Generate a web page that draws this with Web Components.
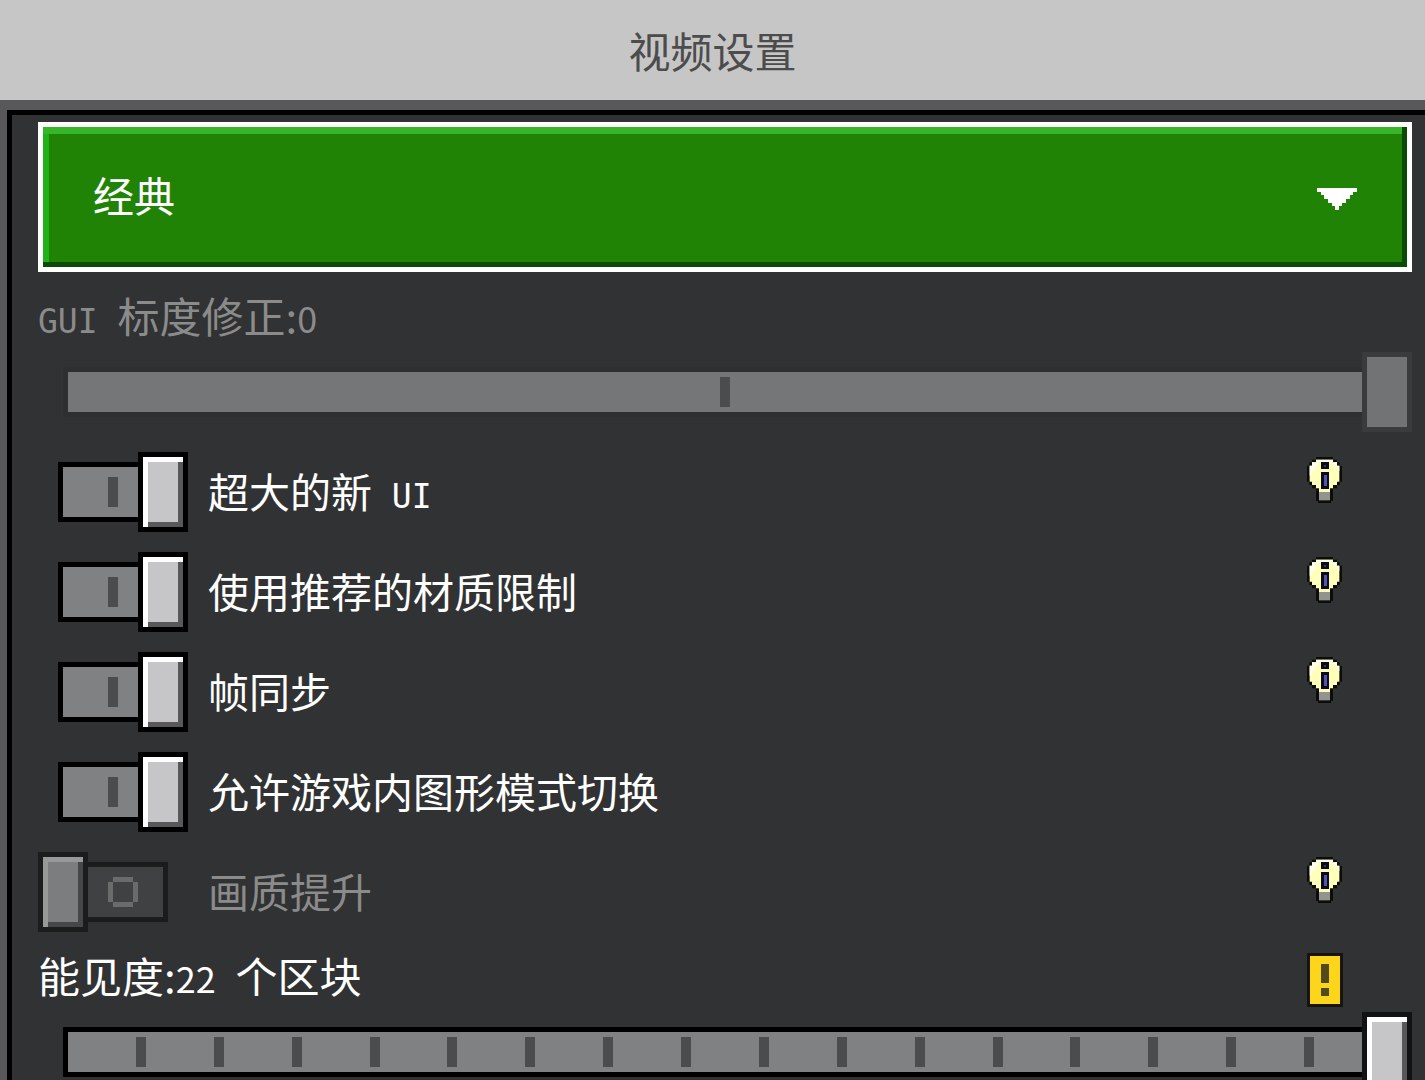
<!DOCTYPE html>
<html lang="zh-CN">
<head>
<meta charset="utf-8">
<meta name="viewport" content="width=device-width, initial-scale=1">
<title>视频设置</title>
<style>
  html, body { height: 100%; }
  body {
    margin: 0;
    background: #313233;
    color: #fff;
    font: 41px/50px "Noto Sans CJK SC", sans-serif;
  }
  .latin { font: 33px/1px "DejaVu Sans Mono", monospace; }
  .num { font-size: 36px; line-height: 1px; }
</style>
</head>
<body>

<settings-screen>
  <span slot="title">视频设置</span>

  <mode-select></mode-select>

  <option-slider steps="2" value="0" disabled><span class="latin">GUI </span>标度修正:<span class="num">0</span></option-slider>

  <option-toggle checked>超大的新<span class="latin"> UI</span><hint-icon slot="hint"></hint-icon></option-toggle>
  <option-toggle checked>使用推荐的材质限制<hint-icon slot="hint"></hint-icon></option-toggle>
  <option-toggle checked>帧同步<hint-icon slot="hint"></hint-icon></option-toggle>
  <option-toggle checked>允许游戏内图形模式切换</option-toggle>
  <option-toggle disabled>画质提升<hint-icon slot="hint"></hint-icon></option-toggle>

  <option-slider steps="17">能见度:<span class="num">22</span><span class="latin"> </span>个区块<hint-icon slot="hint" type="warning"></hint-icon></option-slider>
</settings-screen>

<script>
'use strict'

// page frame: title bar and the scrolling panel
class SettingsScreen extends HTMLElement {
  constructor() {
    super();
    this.attachShadow({mode: 'open'}).innerHTML = `
      <style>
        :host { display: flex; flex-direction: column; height: 100%; }
        header {
          flex: none;
          padding: 25px 0;
          background: #c6c6c6;
          text-align: center;
        }
        h1 { margin: 0; font-size: 42px; font-weight: 400; line-height: 50px; color: #4c4c4c; }
        .frame {
          flex: 1;
          min-height: 0;
          display: flex;
          border: solid #58585a;
          border-width: 10px 0 0 7px;
        }
        main {
          flex: 1;
          min-width: 0;
          overflow: hidden auto;
          scrollbar-width: none;
          padding: 7px 13px 0 26px;
          border: solid #000;
          border-width: 5px 0 0 5px;
        }
      </style>
      <header><h1><slot name="title"></slot></h1></header>
      <div class="frame"><main><slot></slot></main></div>
    `;
  }
}

// green drop-down
class ModeSelect extends HTMLElement {
  constructor() {
    super();
    this.attachShadow({mode: 'open'}).innerHTML = `
      <style>
        :host { display: grid; align-items: center; margin-bottom: 10px; }
        select, svg { grid-area: 1 / 1; }
        select {
          appearance: none;
          box-sizing: border-box;
          width: 100%;
          height: 150px;
          margin: 0;
          padding: 0 100px 6px 50px;
          border: 5px solid #fff;
          border-radius: 0;
          outline: none;
          background: #218306;
          box-shadow: inset -5px -5px #0b4b06, inset 0 7px #37b629, inset 6px 0 #20b317;
          color: #fff;
          font: inherit;
        }
        svg {
          justify-self: end;
          width: 40px;
          height: 22px;
          margin: 4px 55px 0 0;
          pointer-events: none;
        }
      </style>
      <select aria-label="视频模式"><option>经典</option></select>
      <svg viewBox="0 0 120 66" fill="#fff" shape-rendering="crispEdges" aria-hidden="true">
        <path d="M0 0H120V12H108V22H98V33H87V44H76V54H66V66H54V54H44V44H33V33H22V22H12V12H0z"/>
      </svg>
    `;
  }
}

// on/off switch with its text
class OptionToggle extends HTMLElement {
  constructor() {
    super();
    this.attachShadow({mode: 'open'}).innerHTML = `
      <style>
        :host { display: flex; height: 100px; }
        :host([disabled]) { color: #8b8b8b; }
        label { flex: 1; display: flex; align-items: center; gap: 20px; }
        .text { padding-bottom: 4px; }
        input {
          appearance: none;
          flex: none;
          display: grid;
          align-items: center;
          width: 150px;
          height: 80px;
          margin: 0;
        }
        input::before, input::after {
          content: "";
          grid-area: 1 / 1;
          box-sizing: border-box;
          border: 5px solid #000;
        }
        input::before {
          width: 130px;
          height: 60px;
          background: linear-gradient(#6a6b6b, #6a6b6b) 70px 10px / 20px 5px,
            linear-gradient(#6a6b6b, #6a6b6b) 70px 35px / 20px 5px,
            linear-gradient(#6a6b6b, #6a6b6b) 65px 15px / 5px 20px,
            linear-gradient(#6a6b6b, #6a6b6b) 90px 15px / 5px 20px,
            #404142;
          background-repeat: no-repeat;
        }
        input::after {
          width: 50px;
          height: 80px;
          background: #c6c6c8;
          box-shadow: inset 5px 0 #fff, inset 0 5px #fff, inset -5px -5px #58585a;
        }
        input:checked::before {
          justify-self: end;
          background: linear-gradient(#4b4c4d, #4b4c4d) 45px 10px / 10px 30px no-repeat, #808182;
        }
        input:checked::after { justify-self: end; }
        input:disabled::before { border-color: #1b1c1c; }
        input:disabled::after {
          border-color: #1b1c1c;
          background: #7c7d7e;
          box-shadow: inset 5px 0 #979898, inset 0 5px #979898, inset -5px -5px #464748;
        }
        ::slotted([slot="hint"]) { margin: 15px 70px 0 0; }
      </style>
      <label>
        <input type="checkbox">
        <span class="text"><slot></slot></span>
      </label>
      <slot name="hint"></slot>
    `;
    const input = this.shadowRoot.querySelector('input');
    input.checked = this.hasAttribute('checked');
    input.disabled = this.hasAttribute('disabled');
  }
}

// caption line and a stepped slider below it
class OptionSlider extends HTMLElement {
  constructor() {
    super();
    const steps = Number(this.getAttribute('steps'));
    this.attachShadow({mode: 'open'}).innerHTML = `
      <style>
        :host {
          --steps: ${steps};
          --edge: #000;
          --fill: #808182;
          display: block;
          margin-bottom: 10px;
        }
        :host([disabled]) { --edge: #2e2f30; --fill: #757678; color: #8b8b8b; }
        .caption { display: flex; align-items: center; justify-content: space-between; }
        label { padding-bottom: 4px; font-size: 42px; line-height: 66px; }
        .slider { display: grid; align-items: center; }
        .track, input { grid-area: 1 / 1; }
        .track {
          --half: calc(100% / var(--steps) - 5px);
          height: 40px;
          margin: 0 25px;
          border: 5px solid var(--edge);
          background: repeating-linear-gradient(to right,
            #4b4c4d 0 5px, var(--fill) 5px var(--half),
            #4b4c4d var(--half) calc(100% / var(--steps))) center / 100% 30px no-repeat border-box,
            var(--fill);
        }
        input {
          appearance: none;
          width: 100%;
          height: 80px;
          margin: 0;
          background: none;
          outline: none;
        }
        input::-webkit-slider-thumb {
          appearance: none;
          box-sizing: border-box;
          width: 50px;
          height: 80px;
          border: 5px solid #111213;
          background: #c6c6c8;
          box-shadow: inset 5px 0 #fff, inset 0 5px #fff, inset -5px -5px #58585a;
        }
        input:disabled::-webkit-slider-thumb {
          border-color: #3a3b3c;
          background: #727375;
          box-shadow: none;
        }
        ::slotted([slot="hint"]) { margin: 6px 69px 0 0; }
      </style>
      <div class="caption">
        <label for="range"><slot></slot></label>
        <slot name="hint"></slot>
      </div>
      <div class="slider">
        <div class="track"></div>
        <input id="range" type="range" min="0" max="${steps}" value="${steps}">
      </div>
    `;
    this.shadowRoot.querySelector('input').disabled = this.hasAttribute('disabled');
  }
}

// pixel icons: light bulb with "i", yellow warning plate
const icons = {
  info: `<svg width="35" height="46" viewBox="0 0 105 138">
      <path fill="#0c0c08" d="M27 0H78V8H90V16H98V26H105V74H98V84H90V94H78V132H72V138H33V132H27V94H15V84H7V74H0V26H7V16H15V8H27z"/>
      <path fill="#ffffb9" d="M27 8H78V16H90V26H97V74H90V84H78V94H69V105H36V94H27V84H15V74H8V26H15V16H27z"/>
      <path fill="#fffff0" d="M27 8H78V16H90V26H97V42H90V26H78V16H33V26H24V42H15V56H8V26H15V16H27z"/>
      <path fill="#93938f" d="M36 105H69V130H36z"/>
      <path fill="#0c0c18" d="M42 15H66V36H42zM42 45H66V96H42z"/>
      <path fill="#34386e" d="M51 24H57V30H51z"/>
      <path fill="#5055b5" d="M51 54H60V87H51z"/>
    </svg>`,
  warning: `<svg width="36" height="54" viewBox="0 0 107 161" shape-rendering="crispEdges">
      <path fill="#17140c" d="M0 0H107V161H0z"/>
      <path fill="#fdd51b" d="M9 9H98V152H9z"/>
      <path fill="#504a1d" d="M41 33H66V90H41zM41 105H66V129H41z"/>
    </svg>`
};

class HintIcon extends HTMLElement {
  constructor() {
    super();
    this.attachShadow({mode: 'open'}).innerHTML = `
      <style>
        :host { display: block; flex: none; }
        svg { display: block; }
      </style>
      ${icons[this.getAttribute('type') || 'info']}
    `;
  }
}

customElements.define('settings-screen', SettingsScreen);
customElements.define('mode-select', ModeSelect);
customElements.define('option-toggle', OptionToggle);
customElements.define('option-slider', OptionSlider);
customElements.define('hint-icon', HintIcon);
</script>
</body>
</html>
